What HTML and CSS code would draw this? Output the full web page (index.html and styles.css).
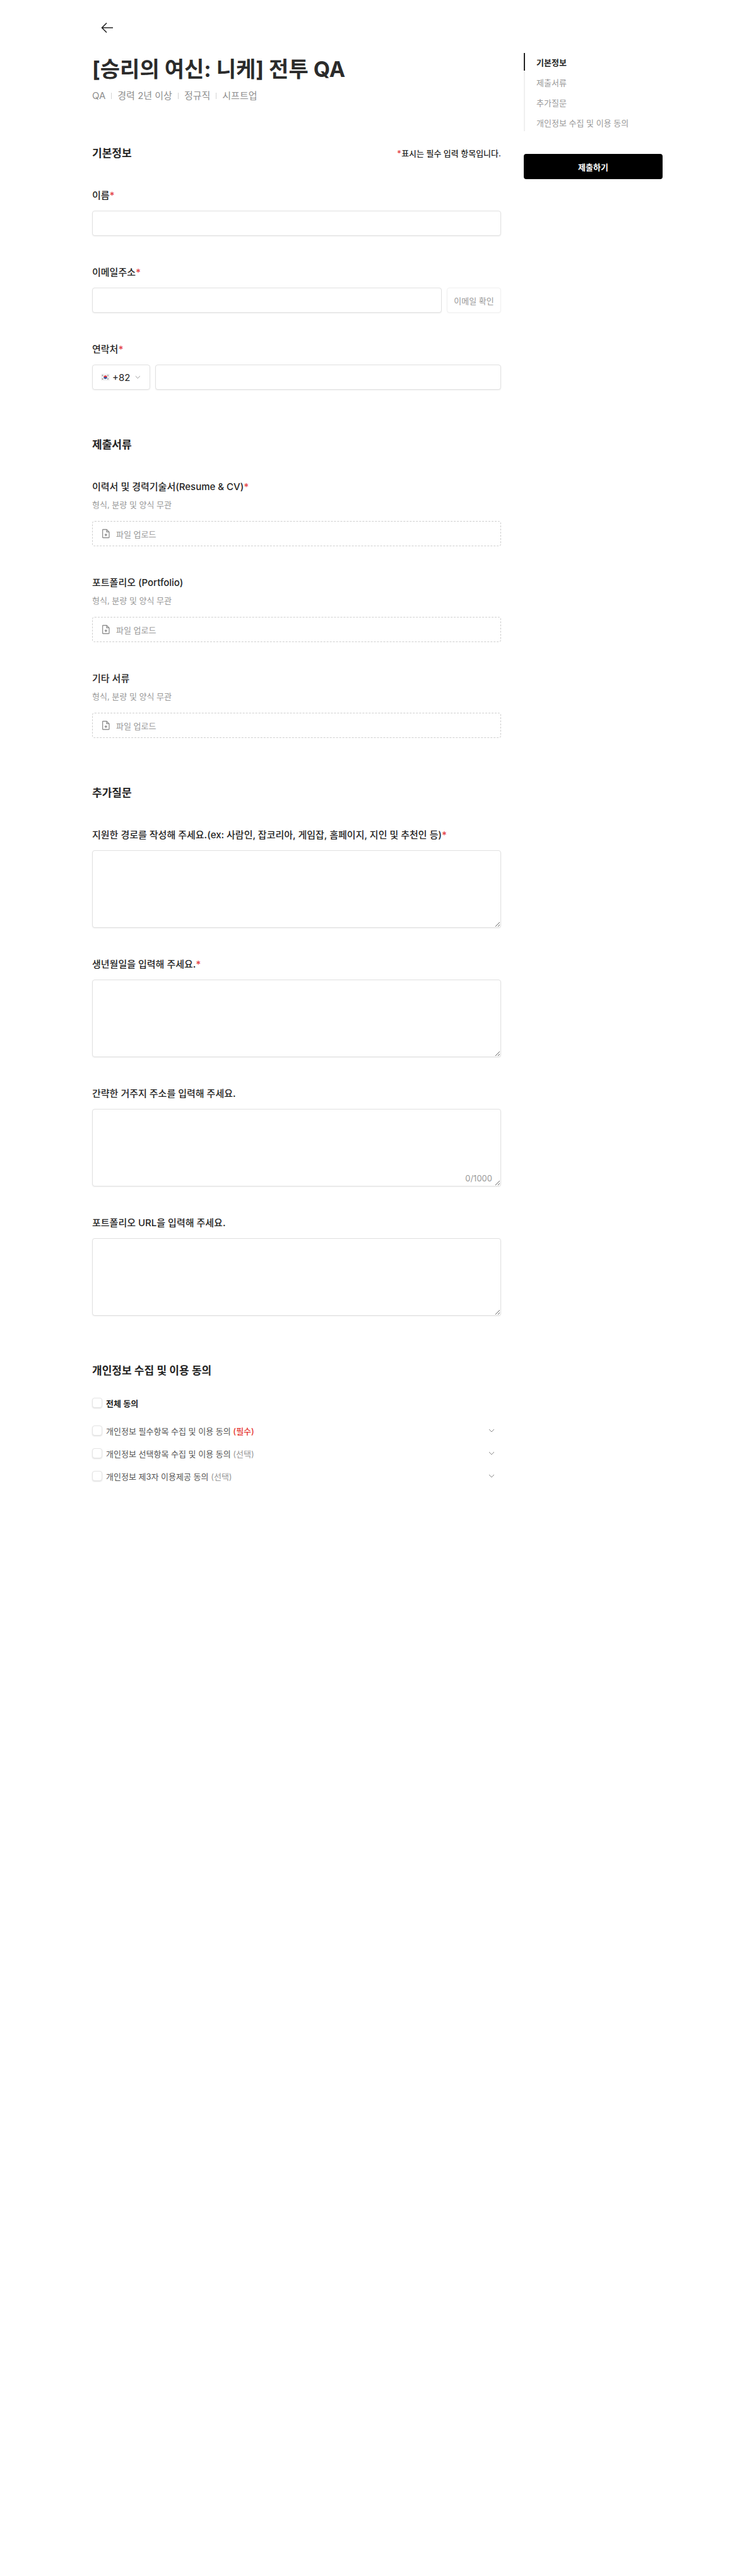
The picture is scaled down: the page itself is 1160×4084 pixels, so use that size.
FILE: index.html
```html
<!DOCTYPE html>
<html lang="ko">
<head>
<meta charset="utf-8">
<title>[승리의 여신: 니케] 전투 QA</title>
<link rel="stylesheet" href="styles.css">
</head>
<body>
<div class="page">
  <main class="main">
    <div class="back" role="button" aria-label="뒤로">
      <svg width="24" height="24" viewBox="0 0 24 24" fill="none" stroke="#242424" stroke-width="1.6"><path d="M21 12H3.5M11 4.5 3.5 12l7.5 7.5"/></svg>
    </div>
    <h1 class="title">[승리의 여신: 니케] 전투 QA</h1>
    <p class="meta"><span>QA</span><i></i><span>경력 2년 이상</span><i></i><span>정규직</span><i></i><span>시프트업</span></p>

    <section class="section first">
      <div class="section-head">
        <h2>기본정보</h2>
        <p class="hint"><b>*</b>표시는 필수 입력 항목입니다.</p>
      </div>
      <div class="field">
        <label class="label">이름<b>*</b></label>
        <input class="input" type="text">
      </div>
      <div class="field">
        <label class="label">이메일주소<b>*</b></label>
        <div class="row">
          <input class="input grow" type="email">
          <button class="verify" type="button">이메일 확인</button>
        </div>
      </div>
      <div class="field">
        <label class="label">연락처<b>*</b></label>
        <div class="row">
          <div class="country">
            <svg class="flag" width="16" height="16" viewBox="0 0 16 16"><rect x="0.3" y="2.3" width="15.4" height="11.4" rx="1" fill="#f4f4f4" stroke="#e2e2e2" stroke-width=".5"/><path d="M4.9 8a3.1 3.1 0 0 1 6.2 0z" fill="#d8343f"/><path d="M4.9 8a3.1 3.1 0 0 0 6.2 0z" fill="#2a4f9e"/><path d="M1.8 5l1.6-1.2M2.4 6l1.6-1.2M12 3.8l1.6 1.2M11.6 4.8l1.6 1.2M1.8 11l1.6 1.2M2.4 10l1.6 1.2M12 12.2l1.6-1.2M11.6 11.2l1.6-1.2" stroke="#333" stroke-width=".7"/></svg>
            <span>+82</span>
            <svg class="caret" width="12" height="12" viewBox="0 0 12 12" fill="none" stroke="#8a8a8a" stroke-width="1"><path d="M2 4l4 4 4-4"/></svg>
          </div>
          <input class="input grow" type="tel">
        </div>
      </div>
    </section>

    <section class="section">
      <h2>제출서류</h2>
      <div class="field">
        <label class="label">이력서 및 경력기술서(Resume &amp; CV)<b>*</b></label>
        <p class="help">형식, 분량 및 양식 무관</p>
        <div class="upload">
          <svg width="16" height="16" viewBox="0 0 16 16" fill="none" stroke="#8f8f8f" stroke-width="1.3"><path d="M2.6 2.2a.7.7 0 0 1 .7-.7H9L13 5.4v8.4a.7.7 0 0 1-.7.7H3.3a.7.7 0 0 1-.7-.7z"/><path d="M9 1.5v3.9h4M7.8 8v4M5.8 10h4"/></svg>
          <span>파일 업로드</span>
        </div>
      </div>
      <div class="field">
        <label class="label">포트폴리오 (Portfolio)</label>
        <p class="help">형식, 분량 및 양식 무관</p>
        <div class="upload">
          <svg width="16" height="16" viewBox="0 0 16 16" fill="none" stroke="#8f8f8f" stroke-width="1.3"><path d="M2.6 2.2a.7.7 0 0 1 .7-.7H9L13 5.4v8.4a.7.7 0 0 1-.7.7H3.3a.7.7 0 0 1-.7-.7z"/><path d="M9 1.5v3.9h4M7.8 8v4M5.8 10h4"/></svg>
          <span>파일 업로드</span>
        </div>
      </div>
      <div class="field">
        <label class="label">기타 서류</label>
        <p class="help">형식, 분량 및 양식 무관</p>
        <div class="upload">
          <svg width="16" height="16" viewBox="0 0 16 16" fill="none" stroke="#8f8f8f" stroke-width="1.3"><path d="M2.6 2.2a.7.7 0 0 1 .7-.7H9L13 5.4v8.4a.7.7 0 0 1-.7.7H3.3a.7.7 0 0 1-.7-.7z"/><path d="M9 1.5v3.9h4M7.8 8v4M5.8 10h4"/></svg>
          <span>파일 업로드</span>
        </div>
      </div>
    </section>

    <section class="section">
      <h2>추가질문</h2>
      <div class="field">
        <label class="label">지원한 경로를 작성해 주세요.(ex: 사람인, 잡코리아, 게임잡, 홈페이지, 지인 및 추천인 등)<b>*</b></label>
        <textarea class="textarea"></textarea>
      </div>
      <div class="field">
        <label class="label">생년월일을 입력해 주세요.<b>*</b></label>
        <textarea class="textarea"></textarea>
      </div>
      <div class="field">
        <label class="label">간략한 거주지 주소를 입력해 주세요.</label>
        <div class="text-wrap">
          <textarea class="textarea"></textarea>
          <span class="count">0/1000</span>
        </div>
      </div>
      <div class="field">
        <label class="label">포트폴리오 URL을 입력해 주세요.</label>
        <textarea class="textarea"></textarea>
      </div>
    </section>

    <section class="section">
      <h2>개인정보 수집 및 이용 동의</h2>
      <div class="agree-all"><span class="check"></span><strong>전체 동의</strong></div>
      <div class="agree"><span class="check"></span><span class="agree-text">개인정보 필수항목 수집 및 이용 동의 <em class="req">(필수)</em></span><svg width="12" height="12" viewBox="0 0 12 12" fill="none" stroke="#8a8a8a" stroke-width="1"><path d="M2 4l4 4 4-4"/></svg></div>
      <div class="agree"><span class="check"></span><span class="agree-text">개인정보 선택항목 수집 및 이용 동의 <em>(선택)</em></span><svg width="12" height="12" viewBox="0 0 12 12" fill="none" stroke="#8a8a8a" stroke-width="1"><path d="M2 4l4 4 4-4"/></svg></div>
      <div class="agree"><span class="check"></span><span class="agree-text">개인정보 제3자 이용제공 동의 <em>(선택)</em></span><svg width="12" height="12" viewBox="0 0 12 12" fill="none" stroke="#8a8a8a" stroke-width="1"><path d="M2 4l4 4 4-4"/></svg></div>
    </section>
  </main>

  <aside class="side">
    <nav class="nav">
      <a class="nav-item active">기본정보</a>
      <a class="nav-item">제출서류</a>
      <a class="nav-item">추가질문</a>
      <a class="nav-item">개인정보 수집 및 이용 동의</a>
    </nav>
    <button class="submit" type="button">제출하기</button>
  </aside>
</div>
</body>
</html>
```

FILE: styles.css
```css
* { box-sizing: border-box; }
html, body { margin: 0; padding: 0; background: #fff; }
body {
  font-family: Inter, "Noto Sans CJK KR", "Noto Sans", sans-serif;
  color: #242424;
  min-height: 4084px;
}
.page {
  display: flex;
  gap: 36px;
  width: 904px;
  margin-left: 146px;
}
.main { width: 648px; flex: none; padding-top: 24px; }
.side { width: 220px; flex: none; padding-top: 84px; }

.back {
  display: flex;
  align-items: center;
  justify-content: center;
  width: 40px;
  height: 40px;
  margin-left: 4px;
}
.title {
  margin: 24px 0 0;
  font-size: 34px;
  line-height: 44px;
  font-weight: 700;
  letter-spacing: 0;
  color: #2b2b2b;
}
.meta {
  display: flex;
  align-items: center;
  gap: 9px;
  margin: 10px 0 0;
  font-size: 15px;
  line-height: 20px;
  color: #8f8f8f;
}
.meta i { width: 1px; height: 10px; background: #d4d4d4; }

.section { margin-top: 75px; }
.section.first { margin-top: 69px; }
.section h2 { margin: 0; font-size: 17px; line-height: 24px; font-weight: 600; }
.section-head { display: flex; align-items: center; justify-content: space-between; }
.hint { margin: 0; font-size: 13px; line-height: 18px; font-weight: 500; }
.hint b, .label b { color: #e5484d; font-weight: 600; }

.field { margin-top: 48px; }
.section h2 + .field, .section-head + .field { margin-top: 45px; }
.label { display: block; font-size: 15px; line-height: 20px; font-weight: 500; margin-bottom: 14px; }
.help { margin: -5px 0 17px; font-size: 13px; line-height: 18px; color: #999; }
.row { display: flex; gap: 8px; }
.grow { flex: 1; min-width: 0; }

.input, .textarea {
  display: block;
  width: 100%;
  border: 1px solid #e0e0e0;
  border-radius: 4px;
  background: #fff;
  box-shadow: 0 1px 2px rgba(0,0,0,.06);
  outline: 0;
  font: inherit;
}
.input { height: 40px; padding: 0 12px; }
.textarea { height: 123px; padding: 10px 12px; resize: vertical; }
.text-wrap { position: relative; }
.count { position: absolute; right: 14px; bottom: 4px; font-size: 13px; line-height: 18px; color: #999; }

.verify {
  flex: none;
  width: 86px;
  height: 40px;
  padding: 0;
  border: 1px solid #f0f0f0;
  border-radius: 4px;
  background: #fff;
  box-shadow: 0 1px 2px rgba(0,0,0,.03);
  font: inherit;
  font-size: 13px;
  color: #999;
}
.country {
  flex: none;
  display: flex;
  align-items: center;
  gap: 4px;
  width: 92px;
  height: 40px;
  padding: 0 13px;
  border: 1px solid #e0e0e0;
  border-radius: 4px;
  box-shadow: 0 1px 2px rgba(0,0,0,.06);
  font-size: 15px;
}
.caret { margin-left: 3px; }
.upload {
  display: flex;
  align-items: center;
  gap: 8px;
  height: 40px;
  padding: 0 13px;
  border: 1px dashed #cfcfcf;
  border-radius: 4px;
  font-size: 13px;
  color: #999;
}

.agree-all, .agree { display: flex; align-items: center; gap: 6px; height: 36px; }
.agree-all { margin-top: 21px; margin-bottom: 8px; font-size: 13px; }
.agree-all strong { font-weight: 600; }
.agree { font-size: 13px; color: #555; padding-right: 9px; }
.agree-text { flex: 1; }
.agree em { font-style: normal; color: #999; }
.agree em.req { color: #e5362f; font-weight: 500; }
.check {
  flex: none;
  width: 16px;
  height: 16px;
  border: 1px solid #e4e4e4;
  border-radius: 4px;
  background: #fff;
  box-shadow: 0 1px 2px rgba(0,0,0,.12);
}

.nav { display: flex; flex-direction: column; gap: 4px; border-left: 2px solid #efefef; }
.nav-item {
  display: flex;
  align-items: center;
  height: 28px;
  margin-left: -2px;
  padding-left: 18px;
  border-left: 2px solid transparent;
  font-size: 13px;
  color: #999;
}
.nav-item.active { border-left-color: #242424; color: #242424; font-weight: 600; }
.submit {
  display: block;
  width: 100%;
  height: 40px;
  margin-top: 36px;
  border: 0;
  border-radius: 4px;
  background: #000;
  color: #fff;
  font: inherit;
  font-size: 13px;
  font-weight: 600;
}
```
